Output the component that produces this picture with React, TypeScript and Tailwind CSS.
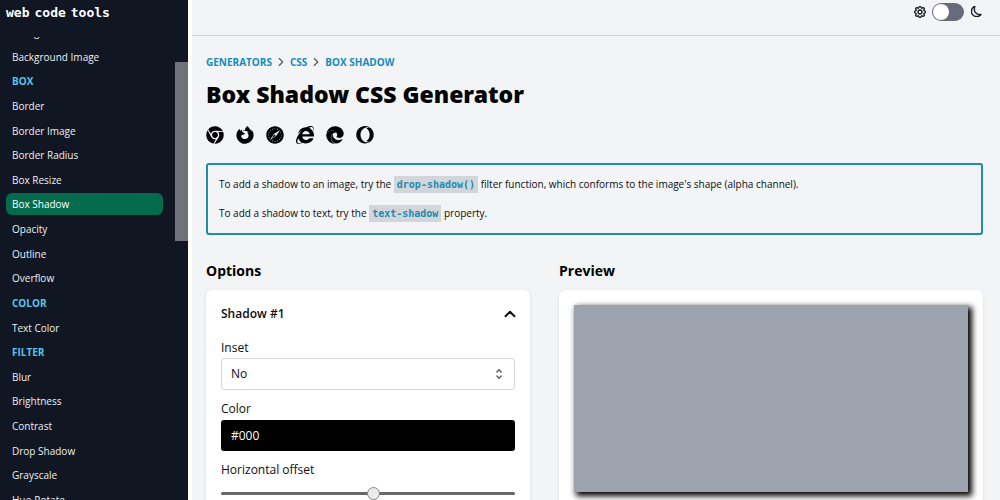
import { useState } from "react";
import { BsGear, BsMoon } from "react-icons/bs";
import {
  FaChrome,
  FaEdge,
  FaFirefoxBrowser,
  FaInternetExplorer,
  FaOpera,
  FaSafari,
} from "react-icons/fa";
import { FiChevronRight, FiChevronUp } from "react-icons/fi";
import { HiSelector } from "react-icons/hi";

type Entry = { label: string; heading?: boolean };

const entries: Entry[] = [
  { label: "Background Color" },
  { label: "Background Image" },
  { label: "BOX", heading: true },
  { label: "Border" },
  { label: "Border Image" },
  { label: "Border Radius" },
  { label: "Box Resize" },
  { label: "Box Shadow" },
  { label: "Opacity" },
  { label: "Outline" },
  { label: "Overflow" },
  { label: "COLOR", heading: true },
  { label: "Text Color" },
  { label: "FILTER", heading: true },
  { label: "Blur" },
  { label: "Brightness" },
  { label: "Contrast" },
  { label: "Drop Shadow" },
  { label: "Grayscale" },
  { label: "Hue-Rotate" },
];

const browsers = [
  { name: "Chrome", Icon: FaChrome },
  { name: "Firefox", Icon: FaFirefoxBrowser },
  { name: "Safari", Icon: FaSafari },
  { name: "Internet Explorer", Icon: FaInternetExplorer },
  { name: "Edge", Icon: FaEdge },
  { name: "Opera", Icon: FaOpera },
];

function Sidebar() {
  return (
    <aside className="flex h-screen w-[188px] shrink-0 flex-col bg-[#111722] text-white">
      <a
        href="#home"
        className="flex h-[37px] shrink-0 gap-[5px] px-1.5 pt-[3px] font-['DejaVu_Sans_Mono',monospace] text-[13px] leading-5 font-bold"
      >
        <span>web</span>
        <span>code</span>
        <span>tools</span>
      </a>
      <div className="flex min-h-0 flex-1 overflow-hidden">
        <nav aria-label="Generators" className="flex-1 pr-3 pl-1.5">
          <ul className="-mt-4 flex h-[490px] flex-col justify-between text-[10px] leading-[22px]">
            {entries.map(({ label, heading }) => (
              <li key={label}>
                {heading ? (
                  <h2 className="px-1.5 font-bold text-[#56c4ee]">{label}</h2>
                ) : (
                  <a
                    href={"#" + label.toLowerCase().replace(" ", "-")}
                    aria-current={label === "Box Shadow" ? "page" : undefined}
                    className="block rounded-md px-1.5 text-[#eceef2] aria-[current=page]:bg-[#056b4d] aria-[current=page]:text-white"
                  >
                    {label}
                  </a>
                )}
              </li>
            ))}
          </ul>
        </nav>
        <div className="w-[13px] pt-[25px]">
          <div className="h-[179px] bg-[#70717a]" />
        </div>
      </div>
    </aside>
  );
}

function Header() {
  return (
    <header className="flex h-9 shrink-0 items-start justify-end gap-1.5 border-b border-[#cfd2d8] pt-[3px] pr-[18px] text-black">
      <BsGear className="mt-[3px] size-3 stroke-[0.7]" />
      <label className="relative flex h-[18px] w-8 cursor-pointer items-center rounded-full bg-[#686b7a]">
        <input type="checkbox" aria-label="Dark mode" className="peer absolute inset-0 m-0 cursor-pointer opacity-0" />
        <span className="ml-px size-4 rounded-full bg-white transition-transform peer-checked:translate-x-3.5" />
      </label>
      <BsMoon className="mt-[3px] ml-px size-[11px] stroke-[0.8]" />
    </header>
  );
}

function Code({ children }: { children: string }) {
  return (
    <code className="bg-[#d2d5d9] px-[3px] py-[3px] font-['DejaVu_Sans_Mono',monospace] text-[10px] font-bold text-[#1c8db0]">
      {children}
    </code>
  );
}

function OptionsCard() {
  const [offset, setOffset] = useState(52);
  const [color, setColor] = useState("#000");
  return (
    <section className="rounded-md bg-white px-[15px] pt-3 pb-6 shadow-[0_1px_3px_rgba(0,0,0,0.12)]">
      <button type="button" className="flex w-full items-center justify-between text-[12px] leading-6 font-semibold">
        Shadow #1
        <FiChevronUp className="-mr-1 size-[18px] stroke-[2.5]" />
      </button>
      <label htmlFor="inset" className="mt-3 block leading-5">
        Inset
      </label>
      <div className="relative">
        <select
          id="inset"
          className="block h-8 w-full appearance-none rounded-[3px] border border-[#d4d5d8] bg-white px-[9px]"
        >
          <option>No</option>
          <option>Yes</option>
        </select>
        <HiSelector className="pointer-events-none absolute top-[9px] right-[9px] size-3.5 text-[#55585f]" />
      </div>
      <label htmlFor="color" className="mt-2 block leading-[22px]">
        Color
      </label>
      <input
        id="color"
        value={color}
        onChange={(e) => setColor(e.target.value)}
        className="block h-[31px] w-full rounded-[3px] bg-black px-[10px] text-white"
      />
      <label htmlFor="offset" className="mt-2 block leading-[22px]">
        Horizontal offset
      </label>
      <input
        id="offset"
        type="range"
        value={offset}
        onChange={(e) => setOffset(Number(e.target.value))}
        className="mt-1 block h-4 w-full appearance-none bg-transparent [&::-webkit-slider-runnable-track]:h-[3px] [&::-webkit-slider-runnable-track]:rounded-full [&::-webkit-slider-runnable-track]:bg-[#68686a] [&::-webkit-slider-thumb]:-mt-[5px] [&::-webkit-slider-thumb]:size-[13px] [&::-webkit-slider-thumb]:appearance-none [&::-webkit-slider-thumb]:rounded-full [&::-webkit-slider-thumb]:border [&::-webkit-slider-thumb]:border-[#85868a] [&::-webkit-slider-thumb]:bg-[#ebebeb]"
      />
    </section>
  );
}

export default function App() {
  return (
    <div className="flex h-screen overflow-hidden bg-[#f2f4f6] font-['Open_Sans','Noto_Sans',sans-serif] text-[12px] text-[#0c0d0f]">
      <Sidebar />
      <div className="w-1 shrink-0 bg-white" />
      <div className="flex min-w-0 flex-1 flex-col overflow-y-auto [scrollbar-width:none]">
        <Header />
        <main className="pt-[18px] pr-[17px] pl-3.5">
          <nav aria-label="Breadcrumb" className="flex items-center gap-0.5 text-[10px] leading-4 font-bold text-[#148cba]">
            <a href="#generators">GENERATORS</a>
            <FiChevronRight className="size-3.5 text-[#55585f]" />
            <a href="#css">CSS</a>
            <FiChevronRight className="size-3.5 text-[#55585f]" />
            <a href="#box-shadow">BOX SHADOW</a>
          </nav>
          <h1 className="mt-2 font-['Noto_Sans',sans-serif] text-[23px] leading-8 font-black text-black">
            Box Shadow CSS Generator
          </h1>
          <ul className="mt-4 flex gap-3 text-black">
            {browsers.map(({ name, Icon }) => (
              <li key={name}>
                <Icon title={name} className="size-[18px]" />
              </li>
            ))}
          </ul>
          <div className="mt-[19px] rounded-[3px] border-2 border-[#1c8dab] px-[11px] py-[5px] text-[10px] leading-7">
            <p>
              To add a shadow to an image, try the <Code>drop-shadow()</Code> filter function, which conforms to the
              image's shape (alpha channel).
            </p>
            <p>
              To add a shadow to text, try the <Code>text-shadow</Code> property.
            </p>
          </div>
          <div className="mt-6 grid grid-cols-[324fr_424fr] gap-[29px]">
            <div>
              <h2 className="mb-[7px] text-[14px] leading-6 font-bold text-black">Options</h2>
              <OptionsCard />
            </div>
            <div>
              <h2 className="mb-[7px] text-[14px] leading-6 font-bold text-black">Preview</h2>
              <section className="rounded-md bg-white p-[15px] pb-6 shadow-[0_1px_3px_rgba(0,0,0,0.12)]">
                <div className="h-[187px] bg-[#9ca2ae] shadow-[3px_3px_6px_1px_#000]" />
              </section>
            </div>
          </div>
        </main>
      </div>
    </div>
  );
}
